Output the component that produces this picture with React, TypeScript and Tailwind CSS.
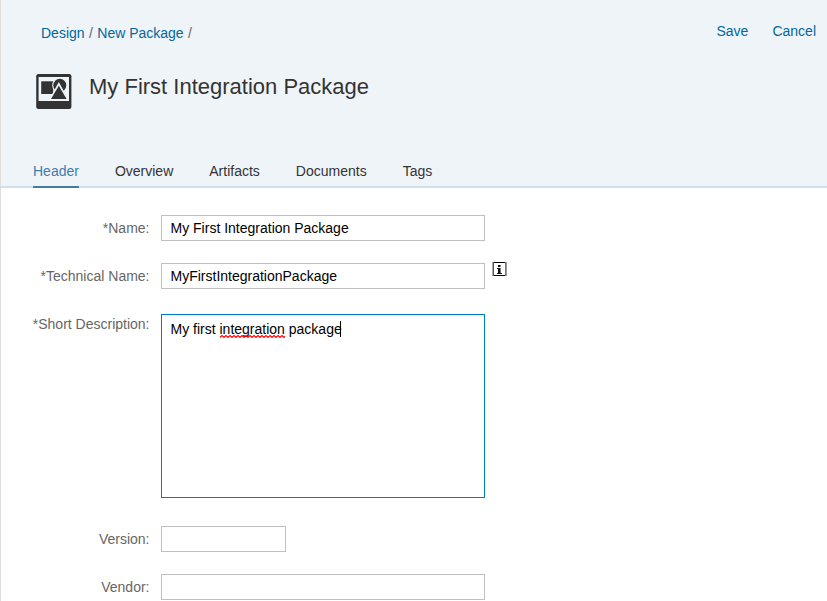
import type { ReactNode } from "react";

const tabs = ["Header", "Overview", "Artifacts", "Documents", "Tags"];

function PackageIcon() {
  return (
    <svg width="36" height="36" viewBox="0 0 36 36" className="shrink-0">
      <rect x="0.2" y="0" width="35.2" height="35" rx="2.2" fill="#333333" />
      <rect x="2.6" y="3" width="30.4" height="24" fill="#eff4f9" />
      <rect x="5.2" y="7.3" width="12" height="12.7" fill="#333333" />
      <circle cx="23.6" cy="11.4" r="7.4" fill="#eff4f9" />
      <circle cx="23.8" cy="11.3" r="6.5" fill="#333333" />
      <path d="M22.8 8 L33 26.4 H12.6 Z" fill="#eff4f9" />
      <path d="M22.8 11.8 L30.6 25 H15 Z" fill="#333333" />
    </svg>
  );
}

function InfoIcon() {
  return (
    <svg width="15" height="15" viewBox="0 0 15 15" className="ml-[7px] -mt-px shrink-0" shapeRendering="crispEdges">
      <rect x="1" y="0" width="13" height="1" fill="#000000" />
      <rect x="1" y="13" width="13" height="1" fill="#000000" />
      <rect x="0" y="0" width="1" height="14" fill="#aaaaaa" />
      <rect x="1" y="0" width="1" height="14" fill="#555555" />
      <rect x="13" y="0" width="1" height="14" fill="#777777" />
      <rect x="14" y="0" width="1" height="14" fill="#999999" />
      <path d="M6 3h2v2H6zM5 6h3v5h2v1H5v-1h1V7H5z" fill="#111111" />
      <path d="M8 3h1v2H8zM8 6h1v5H8z" fill="#777777" />
    </svg>
  );
}

function Misspelled({ children }: { children: ReactNode }) {
  return (
    <span className="relative">
      {children}
      <svg width="65" height="3" className="absolute top-[14px] left-0">
        <defs>
          <pattern id="squiggle" width="4" height="3" patternUnits="userSpaceOnUse">
            <path d="M-1 1.5 L0 2.4 L2 0.6 L4 2.4 L5 1.5" fill="none" stroke="#ff0000" strokeWidth="1.2" />
          </pattern>
        </defs>
        <rect width="65" height="3" fill="url(#squiggle)" />
      </svg>
    </span>
  );
}

function Field({ label, className, children }: { label: string; className: string; children?: ReactNode }) {
  return (
    <div className={`flex items-start ${className}`}>
      <div className="w-[148.5px] shrink-0 pt-[5px] text-right leading-4 text-[#666666]">{label}</div>
      <div className="ml-[11.5px] flex items-start">{children}</div>
    </div>
  );
}

const box = "h-[26px] border border-[#bfbfbf] bg-white px-[8.5px] pt-1 leading-4 text-black";

export default function App() {
  return (
    <div className="h-[601px] w-[827px] overflow-hidden border-l border-[#dddddd] bg-white font-['Liberation_Sans',Arial,sans-serif] text-sm">
      <header className="flex h-[188px] flex-col border-b-2 border-[#d1e0ee] bg-[#eff4f9]">
        <div className="flex items-start justify-between pt-[23px] pr-[11px] pl-10 leading-4 text-[#00679e]">
          <nav className="flex gap-[4.4px] pt-0.5">
            <a>Design</a>
            <span className="text-[#666666]">/</span>
            <a>New Package</a>
            <span className="text-[#666666]">/</span>
          </nav>
          <div className="flex gap-6">
            <button>Save</button>
            <button>Cancel</button>
          </div>
        </div>
        <div className="flex items-start pt-[33px] pl-[35px]">
          <PackageIcon />
          <h1 className="ml-[17px] pt-px text-[22px] leading-6 text-[#333333]">My First Integration Package</h1>
        </div>
        <div className="mt-auto -mb-0.5 flex gap-9 pl-8">
          {tabs.map((tab, i) => (
            <div
              key={tab}
              className={`h-[25px] border-b-2 leading-4 ${
                i === 0 ? "border-[#427cac] text-[#427cac]" : "border-transparent text-[#333333]"
              }`}
            >
              {tab}
            </div>
          ))}
        </div>
      </header>

      <main>
        <Field label="*Name:" className="pt-[27px]">
          <div className={`${box} w-[324px]`}>My First Integration Package</div>
        </Field>
        <Field label="*Technical Name:" className="pt-[22px]">
          <div className={`${box} w-[324px]`}>MyFirstIntegrationPackage</div>
          <InfoIcon />
        </Field>
        <Field label="*Short Description:" className="pt-[22px]">
          <div className="mt-[3px] flex h-[184px] w-[324px] items-start border border-[#007cc0] bg-white px-[8.5px] pt-1.5 leading-4 whitespace-pre text-black">
            <span>My first </span>
            <Misspelled>integration</Misspelled>
            <span> package</span>
            <span className="-ml-[1.5px] h-4 w-px bg-black" />
          </div>
        </Field>
        <Field label="Version:" className="pt-7">
          <div className={`${box} w-[125px]`} />
        </Field>
        <Field label="Vendor:" className="pt-[22px]">
          <div className={`${box} w-[324px]`} />
        </Field>
      </main>
    </div>
  );
}
